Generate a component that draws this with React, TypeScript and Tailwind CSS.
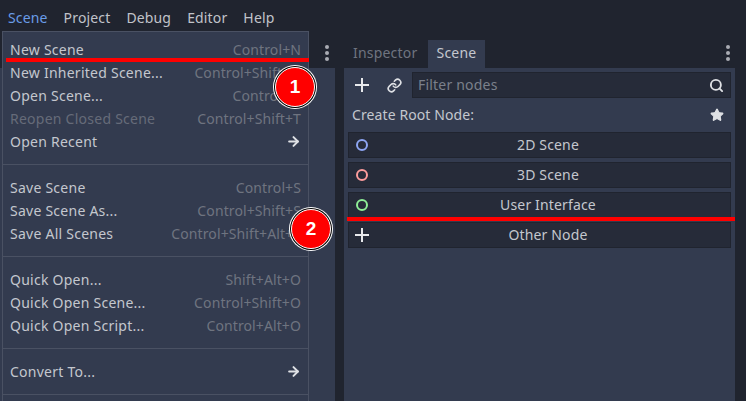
import { Link, Search, Star, ArrowRight } from "lucide-react"

type Item = { label: string; keys?: string; disabled?: boolean; arrow?: boolean }

const menuGroups: Item[][] = [
  [
    { label: "New Scene", keys: "Control+N" },
    { label: "New Inherited Scene...", keys: "Control+Shift+N" },
    { label: "Open Scene...", keys: "Control+O" },
    { label: "Reopen Closed Scene", keys: "Control+Shift+T", disabled: true },
    { label: "Open Recent", arrow: true },
  ],
  [
    { label: "Save Scene", keys: "Control+S" },
    { label: "Save Scene As...", keys: "Control+Shift+S" },
    { label: "Save All Scenes", keys: "Control+Shift+Alt+S" },
  ],
  [
    { label: "Quick Open...", keys: "Shift+Alt+O" },
    { label: "Quick Open Scene...", keys: "Control+Shift+O" },
    { label: "Quick Open Script...", keys: "Control+Alt+O" },
  ],
  [{ label: "Convert To...", arrow: true }],
]

function MenuRow({ item }: { item: Item }) {
  return (
    <div className="flex h-[23px] items-center justify-between pl-[7px] pr-[7px]">
      <span className={item.disabled ? "tracking-[0.25px] text-[#666b79]" : "tracking-[0.25px] text-[#c4c7ce]"}>{item.label}</span>
      {item.keys && <span className="tracking-[0.1px] text-[#6f7480]">{item.keys}</span>}
      {item.arrow && <ArrowRight size={15} strokeWidth={3.2} className="mr-[0px] text-[#dfe1e5]" />}
    </div>
  )
}

function Dots() {
  return (
    <div className="flex flex-col gap-[2px]">
      <div className="size-[4px] rounded-full bg-[#a9acb3]" />
      <div className="size-[4px] rounded-full bg-[#a9acb3]" />
      <div className="size-[4px] rounded-full bg-[#a9acb3]" />
    </div>
  )
}

function PlusIcon() {
  return (
    <svg width="14" height="14" viewBox="0 0 14 14" className="text-[#e8e9ec]">
      <path d="M6 0h2v6h6v2H8v6H6V8H0V6h6z" fill="currentColor" />
    </svg>
  )
}

function NodeButton({ label, color }: { label: string; color?: string }) {
  return (
    <div className="relative flex h-[26px] items-center justify-center border border-[#20242f] bg-[#262b39] pb-[2px] pl-[17px] tracking-[0.15px] text-[#c4c7ce]">
      {color ? (
        <div className={`absolute left-[7px] top-[6px] size-[12px] rounded-full border-2 ${color}`} />
      ) : (
        <div className="absolute left-[6px] top-[5px]">
          <PlusIcon />
        </div>
      )}
      {label}
    </div>
  )
}

function Badge({ n, className }: { n: string; className: string }) {
  return (
    <div
      className={`absolute flex size-[40px] items-center justify-center rounded-full border border-white bg-[#ff0000] font-['Liberation_Sans',sans-serif] text-[19px] font-bold text-white shadow-[0_0_0_1px_#000,0_0_0_2px_#fff] ${className}`}
    >
      {n}
    </div>
  )
}

export default function App() {
  return (
    <div className="relative h-[401px] w-[746px] overflow-hidden bg-[#20242f] font-['Noto_Sans',sans-serif] text-[14px] text-[#c4c7ce]">
      {/* top menu bar */}
      <div className="flex h-[31px] items-center gap-[16px] pl-[8px] pt-[4px] tracking-[0.15px] text-[#c0c3ca]">
        <span className="text-[#699ce8]">Scene</span>
        <span>Project</span>
        <span>Debug</span>
        <span>Editor</span>
        <span>Help</span>
      </div>

      <div className="flex h-[370px] pt-[7px]">
        {/* left dock, mostly behind the menu */}
        <div className="flex w-[335px] shrink-0 flex-col">
          <div className="flex h-[30px] items-center justify-end pr-[6px]">
            <Dots />
          </div>
          <div className="flex-1 bg-[#333b4f]" />
        </div>

        {/* scene dock */}
        <div className="ml-[9px] flex min-w-0 flex-1 flex-col">
          <div className="flex h-[30px] items-end pr-[16px]">
            <div className="flex h-[28px] w-[83px] items-center pb-[3px] pl-[9px] tracking-[0.2px] text-[#6f7480]">Inspector</div>
            <div className="flex h-[29px] w-[59px] items-center justify-center border-x border-t border-[#20242f] bg-[#333b4f] pb-[3px] tracking-[0.2px] text-[#c4c7ce]">
              Scene
            </div>
            <div className="ml-auto self-center">
              <Dots />
            </div>
          </div>
          <div className="mr-[11px] flex-1 bg-[#333b4f] px-[4px] pt-[4px]">
            <div className="flex h-[26px] items-center">
              <div className="flex w-[28px] justify-center">
                <PlusIcon />
              </div>
              <div className="flex w-[36px] justify-center">
                <Link size={15} strokeWidth={2.6} className="text-[#dfe1e5]" />
              </div>
              <div className="flex h-[26px] flex-1 items-center justify-between border border-[#20242f] bg-[#262b39] pl-[5px] pr-[6px] tracking-[0.2px] text-[#7b808b]">
                <span className="pb-[2px]">Filter nodes</span>
                <Search size={15} strokeWidth={3} className="text-[#dfe1e5]" />
              </div>
            </div>
            <div className="flex h-[34px] items-center justify-between pl-[4px] pr-[7px] tracking-[0.1px]">
              <span className="pb-[2px]">Create Root Node:</span>
              <Star size={14} fill="currentColor" className="text-[#dfe1e5]" />
            </div>
            <div className="flex flex-col gap-[4px]">
              <NodeButton label="2D Scene" color="border-[#8da5f3]" />
              <NodeButton label="3D Scene" color="border-[#fc9c9c]" />
              <NodeButton label="User Interface" color="border-[#8eef97]" />
              <NodeButton label="Other Node" />
            </div>
          </div>
        </div>
      </div>

      {/* open scene menu */}
      <div className="absolute left-[2px] top-[31px] h-[380px] w-[307px] border border-[#4a5163] bg-[#333b4f] pt-[6px]">
        {menuGroups.map((group, i) => (
          <div key={i}>
            {i > 0 && (
              <div className="flex h-[23px] items-center">
                <div className="h-px w-full bg-[#4a5163]" />
              </div>
            )}
            {group.map((item) => (
              <MenuRow key={item.label} item={item} />
            ))}
          </div>
        ))}
        <div className="flex h-[23px] items-center">
          <div className="h-px w-full bg-[#4a5163]" />
        </div>
      </div>

      {/* annotations */}
      <div className="absolute left-[6px] top-[58px] h-[4px] w-[303px] bg-[#ff0000]" />
      <div className="absolute left-[347px] top-[217px] h-[4px] w-[388px] bg-[#ff0000]" />
      <Badge n="1" className="left-[275px] top-[67px]" />
      <Badge n="2" className="left-[291px] top-[209px]" />
    </div>
  )
}
